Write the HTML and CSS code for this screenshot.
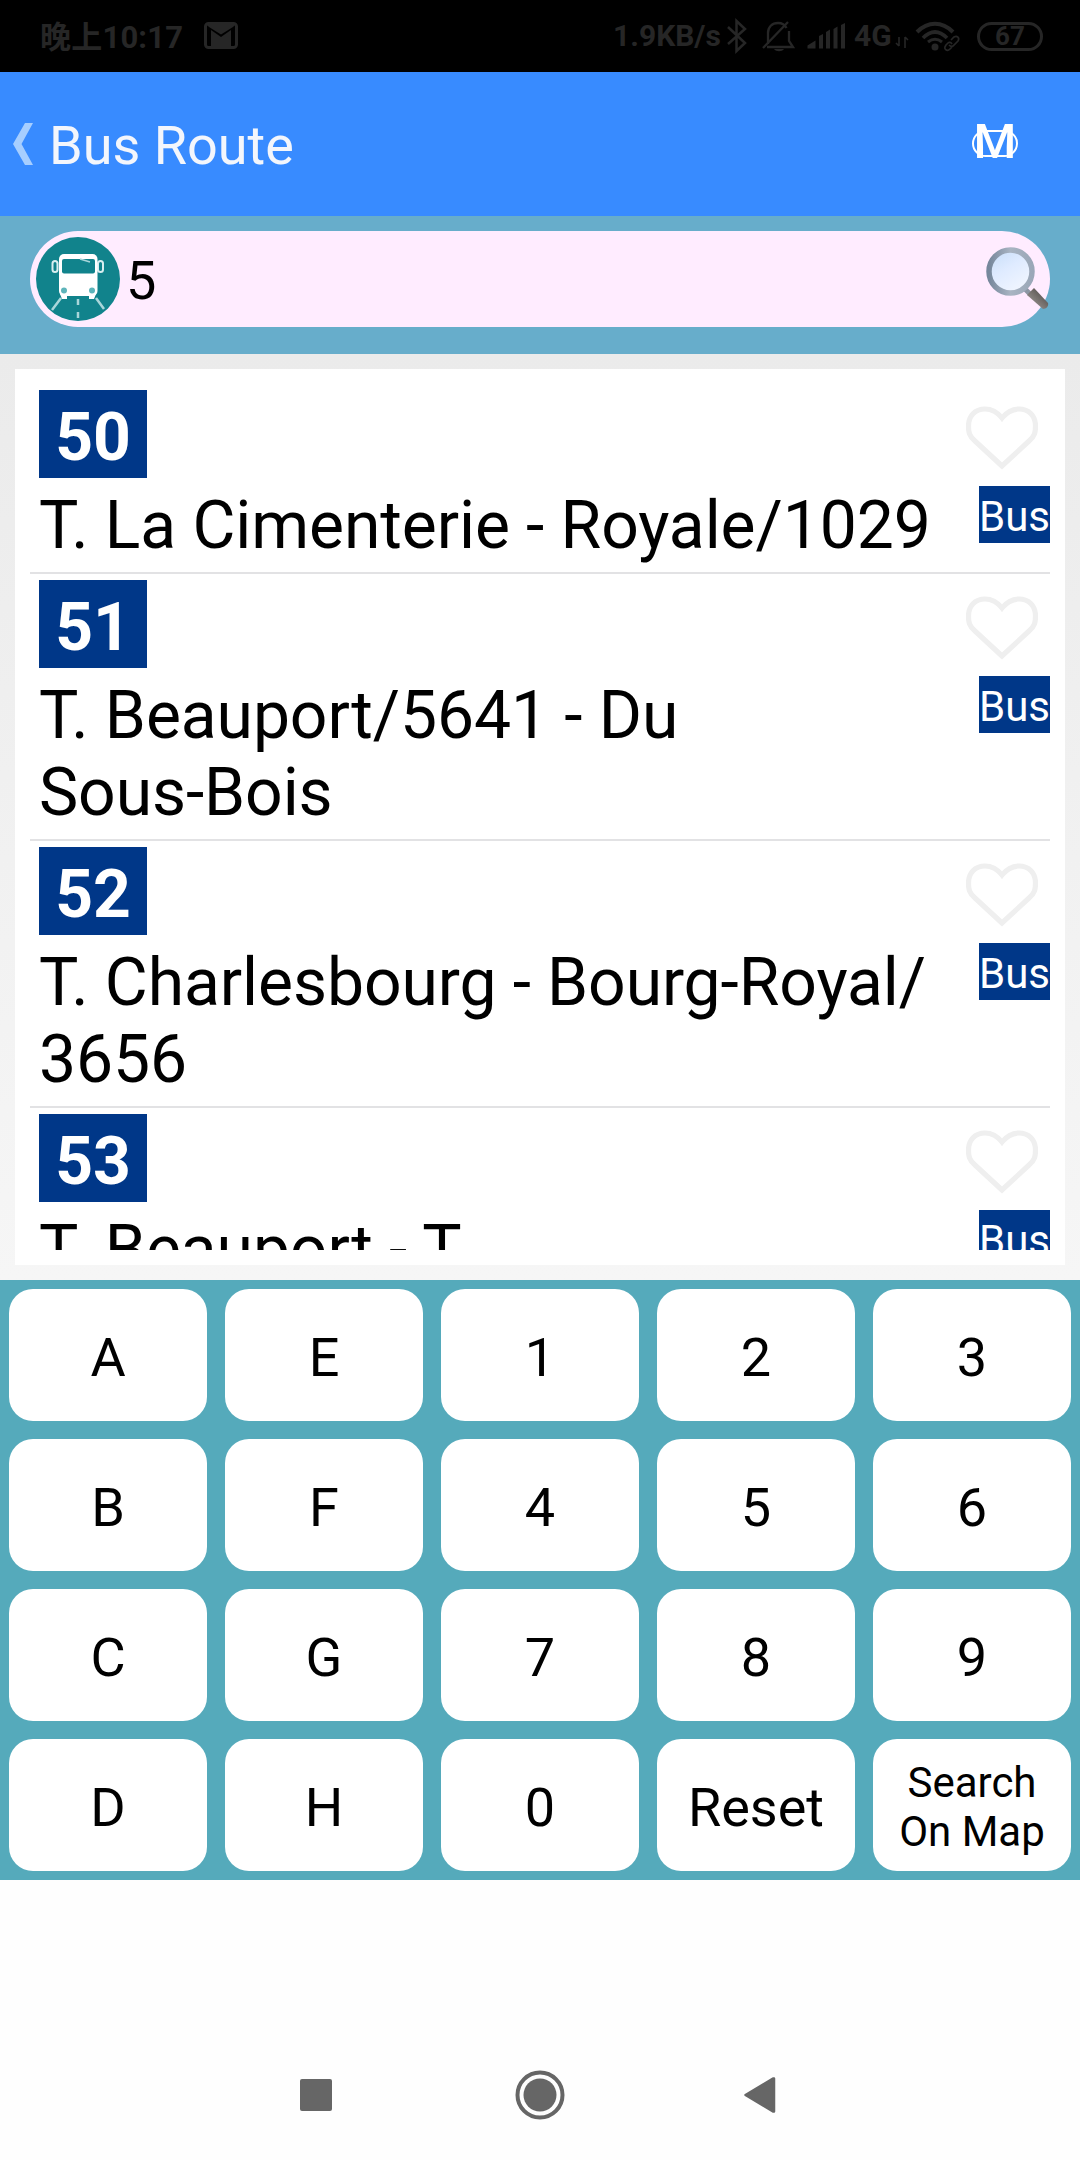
FILE: index.html
```
<!DOCTYPE html>
<html lang="en">
<head>
<meta charset="utf-8">
<title>Bus Route</title>
<link rel="stylesheet" href="styles.css">
</head>
<body>
<svg width="0" height="0" class="defs">
  <symbol id="heart" viewBox="0 0 72 64"><path d="M36 60 L9 35 C3 30 2.500 26 2.500 20 C2.500 10 9 3 19 3 C27 3 32 7 36 12 C40 7 45 3 53 3 C63 3 69.500 10 69.500 20 C69.500 26 69 30 63 35 Z" fill="none" stroke="#efefef" stroke-width="5.200"/></symbol>
</svg>
<div class="status">
  <span class="clock">晚上10:17</span>
  <svg class="mail" width="34" height="28" viewBox="0 0 34 28"><rect x="1.500" y="1.500" width="31" height="24" rx="3" fill="none" stroke="#262626" stroke-width="3"/><path d="M7 26V8l10 7 10-7v18z" fill="#262626"/><path d="M2 2h30l-3 3-12 7.500L5 5z" fill="#262626"/></svg>
  <span class="speed">1.9KB/s</span>
  <svg class="tray" width="128" height="36" viewBox="0 0 128 36" fill="none" stroke="#262626">
    <path d="M2 9l17 16-8.500 8V3L19 11 2 26" stroke-width="2.500"/>
    <path d="M42 26V15c0-6 4-10 10-10 4 0 7 2 8.500 5M63 13v10l4 6H41M37 30L62 4" stroke-width="2.300"/>
    <path d="M48 31h10c-2 3-8 3-10 0z" fill="#262626" stroke="none"/>
    <path d="M81.500 30.500v-3l8-5v8zM93 30.500V18l4-2v14.500zM100 30.500V14l4-2.500v19zM107.500 30.500V11l4-2.500v22zM115 30.500V7l4-2v25.500z" fill="#262626" stroke="none"/>
  </svg>
  <span class="net">4G</span>
  <svg class="wifi" width="68" height="36" viewBox="0 0 68 36" fill="none" stroke="#262626">
    <path d="M5 20v9M5 29l-3-3M11 31V20M11 20l3 3" stroke-width="1.600"/>
    <path d="M23 15C34 4 48 4 59 15" stroke-width="4"/>
    <path d="M29 21C37 13 45 13 53 21" stroke-width="3.700"/>
    <path d="M34 25C39 21 43 21 48 25" stroke-width="3"/>
    <circle cx="41" cy="30" r="3.500" fill="#262626" stroke="none"/>
    <path d="M57 23l3-3c3-2 6 1 4 4l-5 5c-2 1-3 0-4-1M58 27c-1-2-3-2-4-1l-2 2c-3 4 1 7 4 4l2-2" stroke-width="1.700"/>
  </svg>
  <span class="battery">67</span>
</div>
<header class="bar">
  <svg class="back" width="20" height="42" viewBox="0 0 20 42"><path d="M12 0h8L8.500 21 20 42h-8L0 21z" fill="#a6ceff"/></svg>
  <h1 class="title">Bus Route</h1>
  <span class="metro">M<i class="metro-ring"></i></span>
</header>
<div class="search">
  <div class="field">
    <svg width="84" height="84" viewBox="0 0 84 84">
      <circle cx="42" cy="42" r="42" fill="#11838c"/>
      <path d="M25 61L16 73M60 61l8 11M42 62v6M42 75v6" stroke="#a9d6da" stroke-width="2.500" fill="none"/>
      <rect x="16.500" y="24" width="5" height="11" rx="2.500" fill="none" stroke="#d9eef0" stroke-width="2"/>
      <rect x="62" y="24" width="5" height="11" rx="2.500" fill="none" stroke="#d9eef0" stroke-width="2"/>
      <rect x="23" y="17" width="38.500" height="42" rx="5" fill="#fff"/>
      <path d="M24 57h7v5h-5zM53 57h7l-2 5h-5z" fill="#fff"/>
      <rect x="26" y="22" width="33" height="14.500" rx="2" fill="#11838c"/>
      <path d="M44 22l10 3" stroke="#a9d6da" stroke-width="1.500"/>
      <circle cx="28" cy="53.500" r="3" fill="#5db4ba"/><circle cx="56" cy="53.500" r="3" fill="#5db4ba"/>
    </svg>
    <span class="query">5</span>
    <svg class="glass" width="64" height="64" viewBox="0 0 64 64">
      <defs>
        <linearGradient id="lens" x1="0" y1="0" x2="0.600" y2="1"><stop offset="0" stop-color="#c5dcf8"/><stop offset=".5" stop-color="#dfebff"/><stop offset="1" stop-color="#f0f5ff"/></linearGradient>
        <linearGradient id="rim" x1="0" y1="0" x2="1" y2="0"><stop offset="0" stop-color="#76879c"/><stop offset=".5" stop-color="#a9b4c2"/><stop offset="1" stop-color="#9aa7b8"/></linearGradient>
        <linearGradient id="grip" x1="0" y1="1" x2="1" y2="0"><stop offset="0" stop-color="#aaa7a5"/><stop offset=".5" stop-color="#77716e"/><stop offset="1" stop-color="#3f3c3b"/></linearGradient>
      </defs>
      <path d="M38 41l6 6" stroke="#8c96a3" stroke-width="5"/>
      <path d="M41 48l7-7 14 15c1 3-2 6-5 6z" fill="url(#grip)"/>
      <circle cx="24.500" cy="24.500" r="21.500" fill="url(#lens)" stroke="url(#rim)" stroke-width="5.500"/>
    </svg>
  </div>
</div>
<main class="panel">
  <div class="card">
    <ul class="routes">
      <li class="route">
        <div class="info"><b class="num">50</b><p class="name">T. La Cimenterie - Royale/1029</p></div>
        <div class="side"><svg class="heart"><use href="#heart"/></svg><span class="kind">Bus</span></div>
      </li>
      <li class="route">
        <div class="info"><b class="num">51</b><p class="name">T. Beauport/5641 - Du<br>Sous-Bois</p></div>
        <div class="side"><svg class="heart"><use href="#heart"/></svg><span class="kind">Bus</span></div>
      </li>
      <li class="route">
        <div class="info"><b class="num">52</b><p class="name">T. Charlesbourg - Bourg-Royal/<br>3656</p></div>
        <div class="side"><svg class="heart"><use href="#heart"/></svg><span class="kind">Bus</span></div>
      </li>
      <li class="route">
        <div class="info"><b class="num">53</b><p class="name">T. Beauport - T.</p></div>
        <div class="side"><svg class="heart"><use href="#heart"/></svg><span class="kind">Bus</span></div>
      </li>
    </ul>
  </div>
</main>
<div class="keys">
  <button class="key">A</button><button class="key">E</button><button class="key">1</button><button class="key">2</button><button class="key">3</button>
  <button class="key">B</button><button class="key">F</button><button class="key">4</button><button class="key">5</button><button class="key">6</button>
  <button class="key">C</button><button class="key">G</button><button class="key">7</button><button class="key">8</button><button class="key">9</button>
  <button class="key">D</button><button class="key">H</button><button class="key">0</button><button class="key">Reset</button><button class="key small">Search<br>On Map</button>
</div>
<nav class="nav">
  <svg width="32" height="32" viewBox="0 0 32 32"><rect width="32" height="32" rx="2" fill="#666"/></svg>
  <svg class="home" width="50" height="50" viewBox="0 0 50 50"><circle cx="25" cy="25" r="22.500" fill="none" stroke="#666" stroke-width="4"/><circle cx="25" cy="25" r="16.500" fill="#666"/></svg>
  <svg width="32" height="36" viewBox="0 0 32 36"><path d="M1.500 18L29 1.500h1v33h-1z" fill="#666" stroke="#666" stroke-width="2.500" stroke-linejoin="round"/></svg>
</nav>
</body>
</html>
```
FILE: styles.css
```
* { box-sizing: border-box; margin: 0; padding: 0; }
body {
  width: 1080px;
  height: 2160px;
  overflow: hidden;
  display: flex;
  flex-direction: column;
  background: #fefefe;
  color: #000;
  font-family: Roboto, "Noto Sans CJK SC", sans-serif;
}
svg { display: block; flex: none; }
.defs { position: absolute; }

.status {
  height: 72px;
  flex: none;
  display: flex;
  align-items: center;
  padding: 0 37px 0 40px;
  background: #000;
  color: #262626;
  font-size: 30px;
  font-weight: 700;
  white-space: nowrap;
}
.clock { width: 164px; font-size: 31px; padding-bottom: 3px; letter-spacing: 0.2px; }
.mail { margin-top: 0; }
.speed { margin-left: auto; width: 113px; padding-bottom: 1px; }
.net { width: 40px; padding-bottom: 1px; }
.wifi { margin: 0 15px 2px 0; }
.battery {
  width: 66px;
  height: 29px;
  border: 3px solid #262626;
  border-radius: 15px;
  text-align: center;
  line-height: 23px;
  font-size: 26px;
}

.bar {
  height: 144px;
  flex: none;
  display: flex;
  align-items: center;
  padding: 0 62px 0 13px;
  background: #388bff;
  color: #f3f6fc;
}
.title { margin-left: 16px; font-size: 54px; font-weight: 400; padding-top: 3px; }
.metro { position: relative; margin-left: auto; width: 46px; height: 58px; text-align: center; font-size: 49px; font-weight: 500; line-height: 54px; color: #fff; }
.metro-ring { position: absolute; left: 0; top: 15px; width: 46px; height: 27px; border: 2px solid #fff; border-radius: 14px; }

.search { height: 138px; flex: none; padding: 15px 30px; background: #67adcb; }
.field {
  height: 96px;
  display: flex;
  align-items: center;
  padding-left: 6px;
  border-radius: 48px;
  background: #ffecff;
}
.query { flex: 1; padding: 3px 0 0 6px; font-size: 54px; }

.panel {
  height: 926px;
  flex: none;
  padding: 15px;
  background: linear-gradient(#ebebeb, #f6f6f6);
}
.card { height: 896px; padding: 15px; background: #fff; }
.routes { height: 866px; overflow: hidden; list-style: none; }
.route {
  display: flex;
  justify-content: space-between;
  padding: 6px 0 8px 9px;
  border-bottom: 2px solid #e2e2e4;
}
.info { display: flex; flex-direction: column; align-items: flex-start; gap: 9px; }
.num {
  width: 108px;
  height: 88px;
  padding-top: 3px;
  background: #003788;
  color: #fff;
  font-size: 66px;
  line-height: 90px;
  text-align: center;
}
.name { font-size: 66px; line-height: 77px; letter-spacing: -0.09px; white-space: nowrap; }
.side { display: flex; flex-direction: column; align-items: flex-end; padding-top: 16px; }
.heart { width: 72px; height: 64px; margin-right: 12px; }
.kind {
  width: 71px;
  height: 57px;
  margin-top: 16px;
  background: #003788;
  color: #fff;
  font-size: 42px;
  line-height: 61px;
  text-align: center;
}

.keys {
  height: 600px;
  flex: none;
  display: grid;
  grid-template: repeat(4, 132px) / repeat(5, 198px);
  gap: 18px;
  padding: 9px;
  background: #55aabb;
}
.key { border: 0; border-radius: 24px; background: #fff; color: #000; font: 400 54px/1.17 Roboto, sans-serif; padding-top: 5px; }
.small { font-size: 42px; line-height: 49px; padding-top: 3px; }

.nav {
  flex: 1;
  display: flex;
  align-items: center;
  padding: 150px 304px 0 300px;
}
.home { margin: 0 auto 0 183px; }
```
